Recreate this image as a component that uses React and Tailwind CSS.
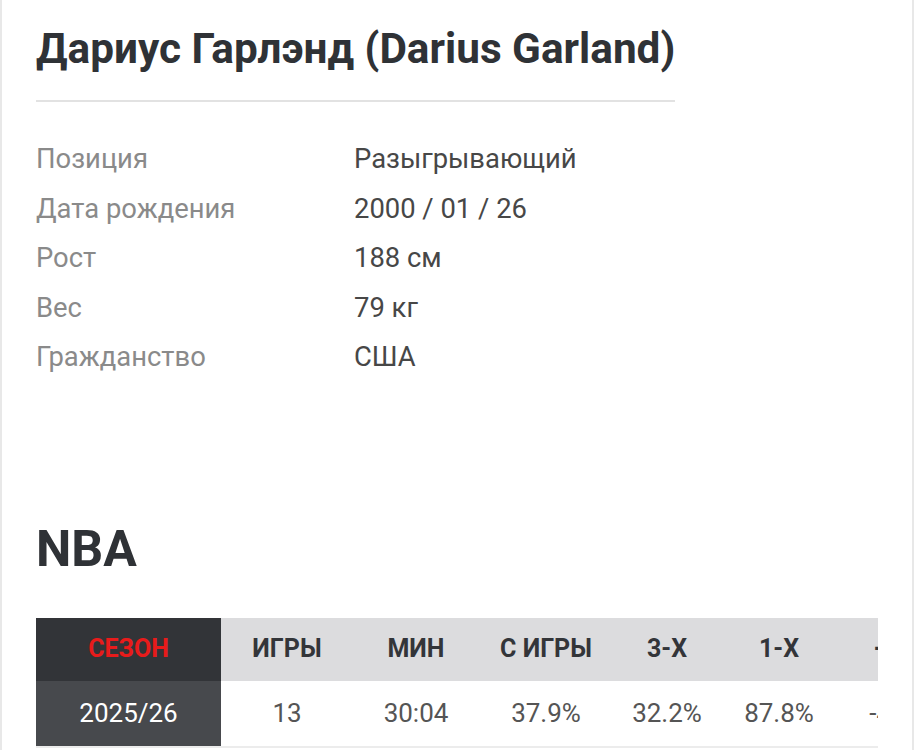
export default function App() {
  const info = [
    ['Позиция', 'Разыгрывающий'],
    ['Дата рождения', '2000 / 01 / 26'],
    ['Рост', '188 см'],
    ['Вес', '79 кг'],
    ['Гражданство', 'США'],
  ]
  const cols = [
    ['ИГРЫ', '13', 'w-[132px]'],
    ['МИН', '30:04', 'w-[126px]'],
    ['С ИГРЫ', '37.9%', 'w-[134px]'],
    ['3-X', '32.2%', 'w-[108px]'],
    ['1-X', '87.8%', 'w-[116px]'],
    ['+/-', '-4.2', 'w-[108px]'],
  ]

  return (
    <div className="min-h-screen bg-[#e8e8e8] px-[2px] font-['Roboto',sans-serif]">
      <div className="min-h-screen bg-white px-[34px] pt-[20px]">
        <h1 className="text-[42.3px] font-bold leading-[58px] text-[#2f3236]">
          Дариус Гарлэнд (Darius Garland)
        </h1>
        <div className="mt-[22px] h-[2px] w-[639px] bg-[#e2e2e2]" />
        <div className="mt-[33px] flex flex-col">
          {info.map(([k, v]) => (
            <div key={k} className="flex h-[49.5px] items-center text-[27.4px]">
              <div className="w-[318px] text-[#8a8a8a]">{k}</div>
              <div className="text-[#474747]">{v}</div>
            </div>
          ))}
        </div>
        <h2 className="mt-[136px] text-[50px] font-bold leading-[60px] text-[#2f3236]">NBA</h2>
        <div className="mt-[39px] w-[842px] overflow-hidden">
          <div className="flex w-max">
            <div className="flex w-[185px] shrink-0 flex-col">
              <div className="flex h-[63px] items-center justify-center bg-[#323438] text-[25px] font-bold text-[#e81b1b]">
                СЕЗОН
              </div>
              <div className="flex h-[67px] items-center justify-center border-b-2 border-[#ececec] bg-[#47494d] text-[26px] text-white">
                2025/26
              </div>
            </div>
            {cols.map(([h, v, w]) => (
              <div key={h} className={`flex ${w} shrink-0 flex-col`}>
                <div className="flex h-[63px] items-center justify-center bg-[#dcdcde] text-[25px] font-bold text-[#333539]">
                  {h}
                </div>
                <div className="flex h-[67px] items-center justify-center border-b-2 border-[#ececec] text-[26px] text-[#555555]">
                  {v}
                </div>
              </div>
            ))}
          </div>
        </div>
      </div>
    </div>
  )
}
